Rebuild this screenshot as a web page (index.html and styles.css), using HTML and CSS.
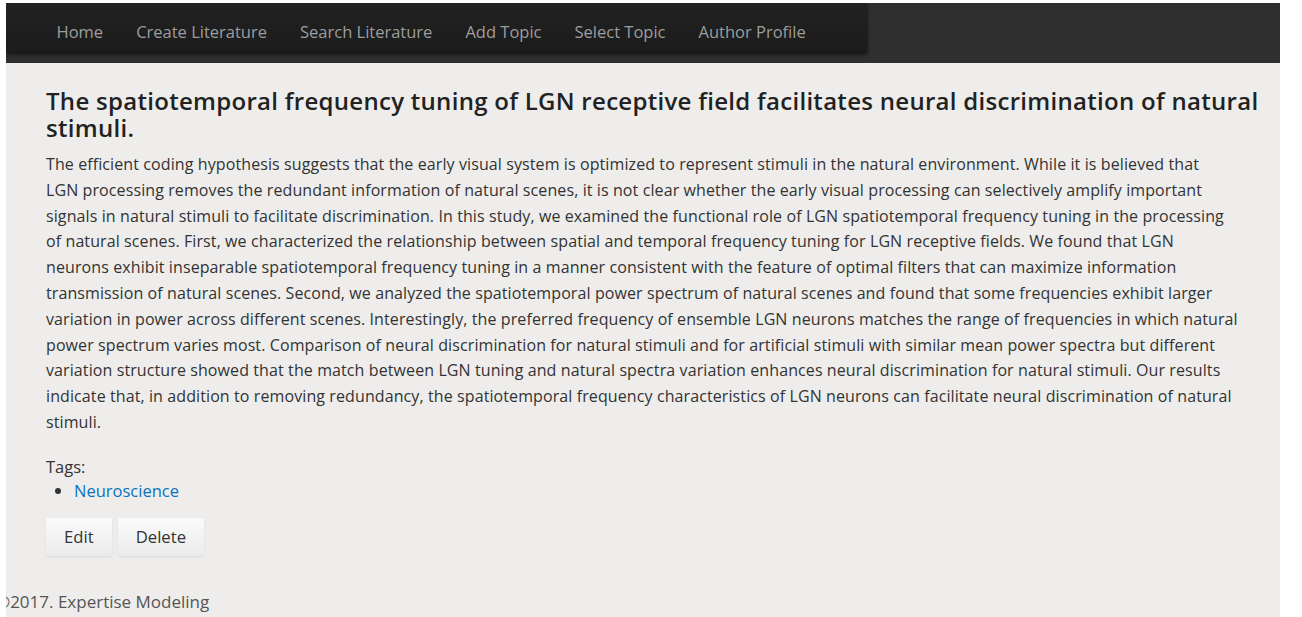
FILE: index.html
```html
<!DOCTYPE html>
<html lang="en">
<head>
<meta charset="utf-8">
<title>Literature</title>
<link rel="stylesheet" href="styles.css">
</head>
<body>
<div class="page">
  <header class="topbar">
    <nav class="nav">
      <a href="#">Home</a>
      <a href="#">Create Literature</a>
      <a href="#">Search Literature</a>
      <a href="#">Add Topic</a>
      <a href="#">Select Topic</a>
      <a href="#">Author Profile</a>
    </nav>
  </header>
  <main class="content">
    <h2 class="title">The spatiotemporal frequency tuning of LGN receptive field facilitates neural discrimination of natural stimuli.</h2>
    <p class="abstract">The efficient coding hypothesis suggests that the early visual system is optimized to represent stimuli in the natural environment. While it is believed that<br>LGN processing removes the redundant information of natural scenes, it is not clear whether the early visual processing can selectively amplify important<br>signals in natural stimuli to facilitate discrimination. In this study, we examined the functional role of LGN spatiotemporal frequency tuning in the processing<br>of natural scenes. First, we characterized the relationship between spatial and temporal frequency tuning for LGN receptive fields. We found that LGN<br>neurons exhibit inseparable spatiotemporal frequency tuning in a manner consistent with the feature of optimal filters that can maximize information<br>transmission of natural scenes. Second, we analyzed the spatiotemporal power spectrum of natural scenes and found that some frequencies exhibit larger<br>variation in power across different scenes. Interestingly, the preferred frequency of ensemble LGN neurons matches the range of frequencies in which natural<br>power spectrum varies most. Comparison of neural discrimination for natural stimuli and for artificial stimuli with similar mean power spectra but different<br>variation structure showed that the match between LGN tuning and natural spectra variation enhances neural discrimination for natural stimuli. Our results<br>indicate that, in addition to removing redundancy, the spatiotemporal frequency characteristics of LGN neurons can facilitate neural discrimination of natural<br>stimuli.</p>
    <div class="tags">
      <div class="tags-label">Tags:</div>
      <ul class="tag-list">
        <li><a href="#">Neuroscience</a></li>
      </ul>
    </div>
    <div class="actions">
      <button class="btn">Edit</button>
      <button class="btn">Delete</button>
    </div>
  </main>
  <footer class="footer">©2017. Expertise Modeling</footer>
</div>
</body>
</html>
```
FILE: styles.css
```css
html, body {
  background: #ffffff;
}
body {
  margin: 3px 22px 0 6px;
  font-family: "Open Sans", "Noto Sans", sans-serif;
  color: #333333;
}
.page {
  background: #eeedeb;
  min-height: 614px;
}
.topbar {
  background: #2f2f2f;
  height: 60px;
}
.nav {
  width: 861px;
  height: 50px;
  box-sizing: border-box;
  padding: 8px 0 0 34px;
  display: flex;
  align-items: flex-start;
  background: linear-gradient(#222222, #1b1b1b);
  box-shadow: 1px 2px 3px rgba(0, 0, 0, 0.45);
  border-bottom-right-radius: 3px;
}
.nav a {
  color: #9d9d9d;
  text-decoration: none;
  font-size: 16.5px;
  padding: 0 16.5px;
  line-height: 42px;
}
.content {
  padding: 24px 10px 0 40px;
}
.title {
  margin: 0;
  font-size: 24px;
  letter-spacing: 0.29px;
  font-weight: 600;
  line-height: 27px;
  color: #222222;
}
.abstract {
  margin: 11px 0 0;
  font-size: 16px;
  letter-spacing: 0.1px;
  line-height: 25.8px;
  white-space: nowrap;
}
.tags {
  margin-top: 19px;
  font-size: 16.5px;
  line-height: 24px;
}
.tag-list {
  margin: 0;
  padding-left: 28px;
}
.tag-list a {
  color: #0a72c0;
  text-decoration: none;
}
.actions {
  margin-top: 15px;
  display: flex;
  gap: 6px;
}
.btn {
  font-family: inherit;
  font-size: 16.7px;
  color: #333333;
  height: 38px;
  padding: 0 18px;
  border: none;
  border-radius: 2px;
  background: linear-gradient(#fbfbfb, #ebebeb);
  box-shadow: 0 1px 2px rgba(0, 0, 0, 0.08);
}
.footer {
  margin: 34px 0 0 -10px;
  font-size: 17px;
  color: #555555;
  line-height: 24px;
}
```
